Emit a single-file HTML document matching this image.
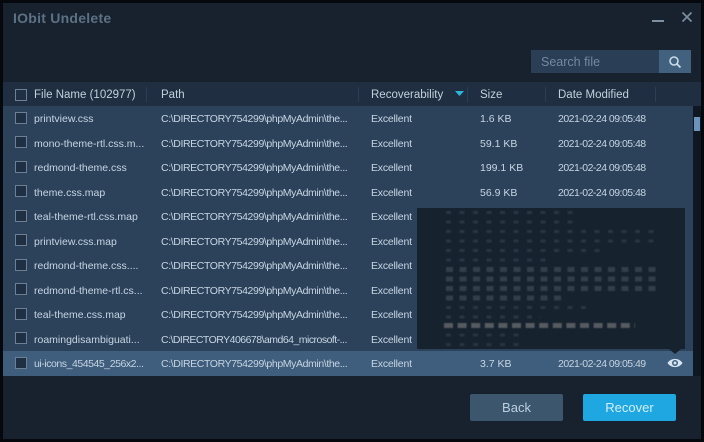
<!DOCTYPE html>
<html>
<head>
<meta charset="utf-8">
<style>
html,body{margin:0;padding:0;width:704px;height:442px;overflow:hidden;background:#05080c}
body{position:relative;font-family:"Liberation Sans",sans-serif}
#w{position:absolute;left:3px;top:3px;width:698px;height:436px;background:#17222e}
.a{position:absolute}
.t{position:absolute;white-space:nowrap;font-size:10.5px;line-height:14px;color:#c6d5e2;margin-top:1px}
.p{left:161px;letter-spacing:-.39px}
.e{left:371px;letter-spacing:-.2px}
.z{left:480px}
.d{left:558px;letter-spacing:-.52px}
.n{left:34px}
.h{position:absolute;white-space:nowrap;font-size:11.5px;line-height:14px;color:#c3d0dc;top:88px}
.c{position:absolute;left:15px;width:10px;height:10px;border:1px solid #6d7f92;background:#1f3044}
.s{position:absolute;top:87px;width:1px;height:15px;background:#2c3e52}
.b{position:absolute;top:394px;width:93px;height:27px;border-radius:2px;text-align:center;line-height:28px;font-size:13px}
</style>
</head>
<body>
<div id="w"></div>
<div class="t" style="left:13px;top:10px;margin:0;font-size:14px;line-height:17px;color:#5d7185;letter-spacing:.25px;font-weight:bold">IObit Undelete</div>
<div class="a" style="left:652px;top:20px;width:12px;height:1.5px;background:#7d90a2"></div>
<svg class="a" style="left:681px;top:11px" width="12" height="12"><path d="M1.5 1.5L10.5 10.5M10.5 1.5L1.5 10.5" stroke="#7d90a2" stroke-width="1.6" fill="none"/></svg>

<div class="a" style="left:531px;top:50px;width:128px;height:23px;background:#2a3f56"></div>
<div class="a" style="left:659px;top:50px;width:32px;height:23px;background:#42617f"></div>
<div class="t" style="left:541px;top:55px;margin:0;font-size:12.5px;color:#73899e">Search file</div>
<svg class="a" style="left:668px;top:55px" width="14" height="14"><circle cx="6" cy="6" r="4" fill="none" stroke="#c9dbe9" stroke-width="1.6"/><path d="M9 9L12.5 12.5" stroke="#c9dbe9" stroke-width="1.8"/></svg>

<div class="a" style="left:3px;top:82px;width:698px;height:24px;background:#1f2f41"></div>
<div class="a" style="left:3px;top:106px;width:690px;height:245px;background:#2c425b"></div>
<div class="a" style="left:3px;top:351px;width:690px;height:25px;background:#3f5d7c"></div>
<div class="a" style="left:693px;top:106px;width:8px;height:270px;background:#0f1822"></div>
<div class="a" style="left:694px;top:117px;width:6px;height:14px;background:#6c93ba"></div>

<div class="c" style="top:89px"></div>
<div class="h" style="left:34px">File Name (102977)</div>
<div class="s" style="left:146px"></div>
<div class="h" style="left:161px">Path</div>
<div class="s" style="left:358px"></div>
<div class="h" style="left:371px">Recoverability</div>
<svg class="a" style="left:455px;top:91px" width="9" height="6"><path d="M0 0H9L4.5 5Z" fill="#2bb7dc"/></svg>
<div class="s" style="left:467px"></div>
<div class="h" style="left:480px">Size</div>
<div class="s" style="left:545px"></div>
<div class="h" style="left:558px">Date Modified</div>
<div class="s" style="left:655px"></div>

<div class="c" style="top:112px"></div><div class="t n" style="top:111px">printview.css</div><div class="t p" style="top:111px">C:\DIRECTORY754299\phpMyAdmin\the...</div><div class="t e" style="top:111px">Excellent</div><div class="t z" style="top:111px">1.6 KB</div><div class="t d" style="top:111px">2021-02-24 09:05:48</div>
<div class="c" style="top:136px"></div><div class="t n" style="top:136px">mono-theme-rtl.css.m...</div><div class="t p" style="top:136px">C:\DIRECTORY754299\phpMyAdmin\the...</div><div class="t e" style="top:136px">Excellent</div><div class="t z" style="top:136px">59.1 KB</div><div class="t d" style="top:136px">2021-02-24 09:05:48</div>
<div class="c" style="top:161px"></div><div class="t n" style="top:160px">redmond-theme.css</div><div class="t p" style="top:160px">C:\DIRECTORY754299\phpMyAdmin\the...</div><div class="t e" style="top:160px">Excellent</div><div class="t z" style="top:160px">199.1 KB</div><div class="t d" style="top:160px">2021-02-24 09:05:48</div>
<div class="c" style="top:185px"></div><div class="t n" style="top:185px">theme.css.map</div><div class="t p" style="top:185px">C:\DIRECTORY754299\phpMyAdmin\the...</div><div class="t e" style="top:185px">Excellent</div><div class="t z" style="top:185px">56.9 KB</div><div class="t d" style="top:185px">2021-02-24 09:05:48</div>
<div class="c" style="top:210px"></div><div class="t n" style="top:209px">teal-theme-rtl.css.map</div><div class="t p" style="top:209px">C:\DIRECTORY754299\phpMyAdmin\the...</div><div class="t e" style="top:209px">Excellent</div>
<div class="c" style="top:234px"></div><div class="t n" style="top:234px">printview.css.map</div><div class="t p" style="top:234px">C:\DIRECTORY754299\phpMyAdmin\the...</div><div class="t e" style="top:234px">Excellent</div>
<div class="c" style="top:259px"></div><div class="t n" style="top:258px">redmond-theme.css....</div><div class="t p" style="top:258px">C:\DIRECTORY754299\phpMyAdmin\the...</div><div class="t e" style="top:258px">Excellent</div>
<div class="c" style="top:283px"></div><div class="t n" style="top:283px">redmond-theme-rtl.cs...</div><div class="t p" style="top:283px">C:\DIRECTORY754299\phpMyAdmin\the...</div><div class="t e" style="top:283px">Excellent</div>
<div class="c" style="top:308px"></div><div class="t n" style="top:307px">teal-theme.css.map</div><div class="t p" style="top:307px">C:\DIRECTORY754299\phpMyAdmin\the...</div><div class="t e" style="top:307px">Excellent</div>
<div class="c" style="top:332px"></div><div class="t n" style="top:332px">roamingdisambiguati...</div><div class="t p" style="top:332px;letter-spacing:-.52px">C:\DIRECTORY406678\amd64_microsoft-...</div><div class="t e" style="top:332px">Excellent</div>
<div class="c" style="top:357px"></div><div class="t n" style="top:356px;letter-spacing:-.45px">ui-icons_454545_256x2...</div><div class="t p" style="top:356px">C:\DIRECTORY754299\phpMyAdmin\the...</div><div class="t e" style="top:356px">Excellent</div><div class="t z" style="top:356px">3.7 KB</div><div class="t d" style="top:356px">2021-02-24 09:05:49</div>

<svg class="a" style="left:416px;top:207px" width="271" height="150">
<path d="M0.5 0.5H269.5V142.5H0.5Z" fill="#17222f" stroke="#2c425b"/>
<path d="M253 142L259 147L265 142Z" fill="#17222f"/>
<g fill="none" stroke-width="3" stroke-dasharray="5 8.5" style="filter:blur(.4px)">
<g stroke="#2a3644">
<path d="M30 5.5H165M30 15H165"/>
<path d="M30 24.5H246M30 34H246"/>
<path d="M30 43.5H192M30 53H138"/>
</g>
<g stroke="#333e4a" stroke-width="5" stroke-dasharray="7 6.5">
<path d="M30 62.5H246M30 72H246M30 81.5H246M30 91H151"/>
</g>
<g stroke="#2b3643">
<path d="M30 100.5H178M30 110H125"/>
</g>
<path d="M28 118.5H219" stroke="#565b60" stroke-width="5" stroke-dasharray="9 4.6"/>
<path d="M30 128H111M30 137.5H111" stroke="#29343f"/>
</g>
</svg>

<svg class="a" style="left:667px;top:357px" width="16" height="12"><path d="M0.5 6C4 0.5 12 0.5 15.5 6C12 11.5 4 11.5 0.5 6Z" fill="#d7e6f2"/><circle cx="8" cy="6" r="3" fill="#3f5d7c"/><circle cx="8" cy="6" r="1.5" fill="#d7e6f2"/></svg>

<div class="b" style="left:470px;background:#3c566e;color:#bcd0e0">Back</div>
<div class="b" style="left:583px;background:#1ea7e0;color:#d5eefa">Recover</div>
</body>
</html>
